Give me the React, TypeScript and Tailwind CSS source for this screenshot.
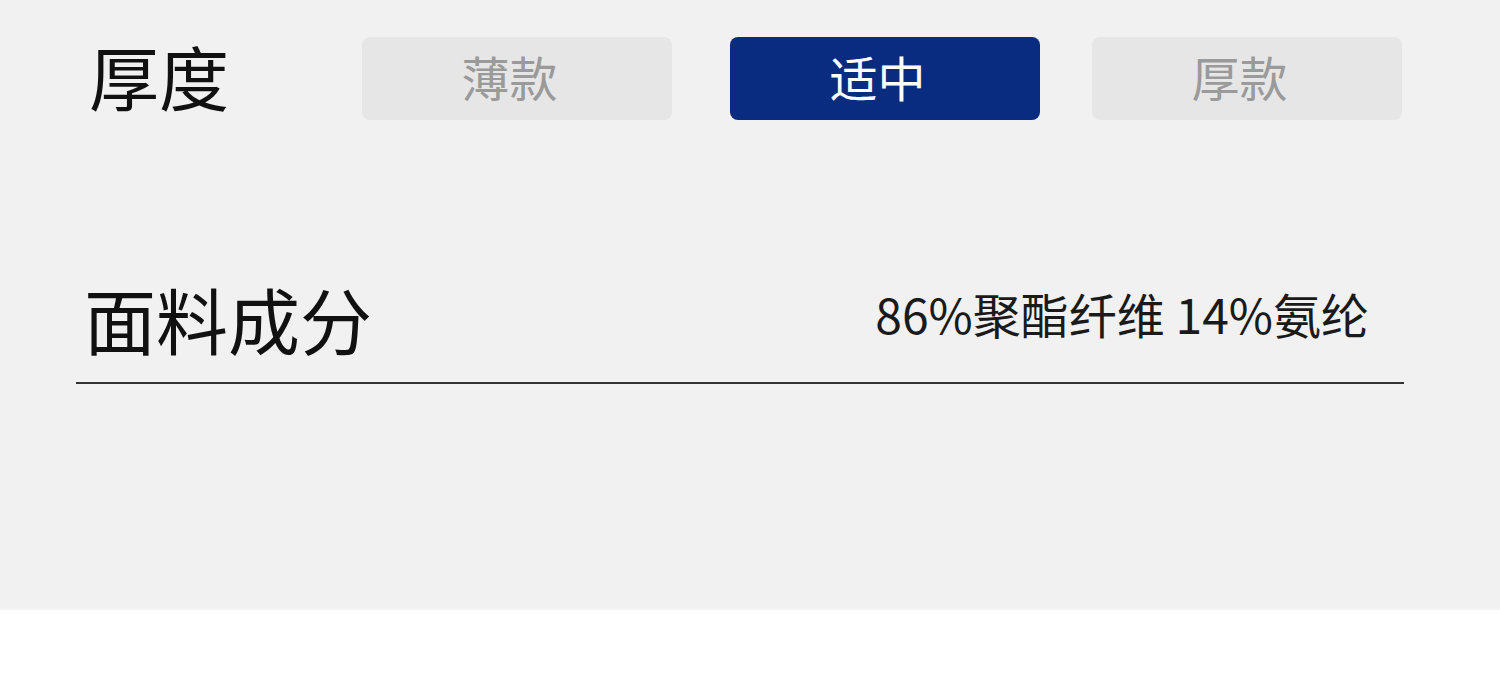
function ThicknessOption({ label, active, className }: { label: string; active?: boolean; className?: string }) {
  return (
    <div
      className={
        (active
          ? "bg-[#0a2c80] text-white "
          : "bg-[#e6e6e6] text-[#9a9a9a] ") +
        "flex h-[83px] w-[310px] items-center justify-center rounded-[8px] pr-[15px] pb-[6px] text-[48px] " +
        (className ?? "")
      }
    >
      {label}
    </div>
  );
}

export default function App() {
  return (
    <div
      className="min-h-[694px] w-full bg-white"
      style={{ fontFamily: '"Noto Sans CJK SC", "Noto Sans", sans-serif' }}
    >
      <div className="h-[610px] bg-[#f1f1f1] pt-[37px]">
        <div className="flex items-center">
          <div className="mb-[6px] w-[362px] pl-[89px] text-[70px] leading-none text-[#111]">厚度</div>
          <ThicknessOption label="薄款" />
          <ThicknessOption label="适中" active className="ml-[58px]" />
          <ThicknessOption label="厚款" className="ml-[52px]" />
        </div>

        <div className="ml-[76px] mr-[96px] mt-[162px] flex items-center justify-between border-b-2 border-[#333] pb-[28px] pl-[8px] pr-[35px]">
          <div className="text-[72px] leading-none text-[#111]">面料成分</div>
          <div className="mb-[10px] text-[48px] leading-none text-[#1a1a1a]">86%聚酯纤维 14%氨纶</div>
        </div>
      </div>
    </div>
  );
}
